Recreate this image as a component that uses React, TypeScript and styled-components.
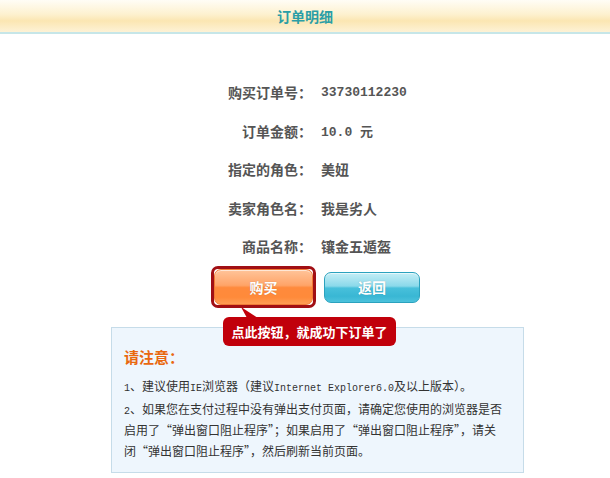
import React from "react";
import styled, { createGlobalStyle } from "styled-components";

const Global = createGlobalStyle`
  html, body { margin: 0; padding: 0; background: #fff; }
  body { font-family: "Noto Sans CJK SC", "Noto Sans", sans-serif; }
`;

const Page = styled.div`
  width: 610px;
  min-height: 478px;
  background: #fff;
`;

const Header = styled.div`
  height: 32px;
  display: flex;
  align-items: center;
  justify-content: center;
  background: linear-gradient(#fffdf6 0%, #fdf1cf 45%, #fbe6b2 65%, #fdf2d6 100%);
  border-bottom: 2px solid #c6e6e8;
`;

const Title = styled.h1`
  margin: 0;
  font-size: 14px;
  font-weight: bold;
  color: #2a9ea6;
`;

const Details = styled.div`
  display: grid;
  grid-template-columns: 312px 1fr;
  column-gap: 9px;
  padding-top: 39px;
`;

const Label = styled.div`
  height: 38.5px;
  display: flex;
  align-items: center;
  justify-content: flex-end;
  font-size: 14px;
  font-weight: bold;
  color: #555;
`;

const Value = styled.div<{ $mono?: boolean }>`
  height: 38.5px;
  display: flex;
  align-items: center;
  font-family: ${(p) => (p.$mono ? `"Liberation Mono", "Noto Sans CJK SC", monospace` : `"Noto Sans CJK SC", sans-serif`)};
  font-size: ${(p) => (p.$mono ? "13px" : "14px")};
  font-weight: bold;
  color: #555;
`;

const Buttons = styled.div`
  display: flex;
  gap: 8px;
  align-items: center;
  padding-left: 211px;
  height: 43px;
`;

const Highlight = styled.div`
  position: relative;
  border: 3px solid #a10f14;
  border-radius: 7px;
  display: flex;
`;

const Btn = styled.button<{ $kind: "buy" | "back" }>`
  border: 1px solid ${(p) => (p.$kind === "buy" ? "#f07a35" : "#2ba2be")};
  border-radius: 7px;
  width: ${(p) => (p.$kind === "buy" ? "99px" : "96px")};
  height: ${(p) => (p.$kind === "buy" ? "36px" : "31px")};
  padding: 0;
  font-family: "Noto Sans CJK SC", sans-serif;
  font-size: 14px;
  font-weight: bold;
  color: #fff;
  text-shadow: 0 0 1px rgba(0,0,0,0.25);
  cursor: pointer;
  background: ${(p) =>
    p.$kind === "buy"
      ? "linear-gradient(#ffc49a 0%, #ffa468 45%, #ff8a3c 52%, #ff8a3a 80%, #ff9d54 100%)"
      : "linear-gradient(#c4eef6 0%, #8bd9ea 45%, #48c0db 52%, #39b7d4 80%, #4cc2dc 100%)"};
  box-shadow: inset 0 1px 0 rgba(255,255,255,0.6);
`;

const Tip = styled.div`
  position: absolute;
  left: 9px;
  top: 48px;
  width: 173px;
  height: 29px;
  border-radius: 6px;
  background: #c1000b;
  color: #fff;
  font-size: 13px;
  font-weight: bold;
  display: flex;
  align-items: center;
  justify-content: center;
  white-space: nowrap;
  z-index: 2;
`;

const TipArrow = styled.svg`
  position: absolute;
  left: 18px;
  top: -10px;
`;

const Notice = styled.div`
  box-sizing: border-box;
  margin: 18px 0 0 111px;
  width: 413px;
  background: #eef6fd;
  border: 1px solid #c6dce9;
  padding: 19px 12px 11px 12px;
`;

const NoticeTitle = styled.div`
  font-size: 15px;
  font-weight: bold;
  color: #e9680f;
  height: 20px;
  line-height: 20px;
  margin-bottom: 8px;
`;

const Line = styled.div<{ $gap?: boolean }>`
  font-size: 12px;
  color: #333;
  height: 21px;
  line-height: 21px;
  white-space: nowrap;
  margin-bottom: ${(p) => (p.$gap ? "2px" : "0")};
`;

const Latin = styled.span`
  font-family: "Liberation Mono", monospace;
  font-size: 10px;
  line-height: 1;
`;

const rows: [string, string, boolean?][] = [
  ["购买订单号：", "33730112230", true],
  ["订单金额：", "10.0 元", true],
  ["指定的角色：", "美妞"],
  ["卖家角色名：", "我是劣人"],
  ["商品名称：", "镶金五遁盔"],
];

export default function App() {
  return (
    <Page>
      <Global />
      <Header>
        <Title>订单明细</Title>
      </Header>
      <Details>
        {rows.map(([l, v, m]) => (
          <React.Fragment key={l}>
            <Label>{l}</Label>
            <Value $mono={!!m}>{v}</Value>
          </React.Fragment>
        ))}
      </Details>
      <Buttons>
        <Highlight>
          <Btn $kind="buy">购买</Btn>
          <Tip>
            <TipArrow width="18" height="12" viewBox="0 0 18 12">
              <polygon points="0,0 6,11 17,11" fill="#c1000b" />
            </TipArrow>
            点此按钮，就成功下订单了
          </Tip>
        </Highlight>
        <Btn $kind="back">返回</Btn>
      </Buttons>
      <Notice>
        <NoticeTitle>请注意：</NoticeTitle>
        <Line $gap>
          <Latin>1</Latin>、建议使用<Latin>IE</Latin>浏览器（建议<Latin>Internet Explorer6.0</Latin>及以上版本）。
        </Line>
        <Line>
          <Latin>2</Latin>、如果您在支付过程中没有弹出支付页面，请确定您使用的浏览器是否
        </Line>
        <Line>启用了“弹出窗口阻止程序”；如果启用了“弹出窗口阻止程序”，请关</Line>
        <Line>闭“弹出窗口阻止程序”，然后刷新当前页面。</Line>
      </Notice>
    </Page>
  );
}
